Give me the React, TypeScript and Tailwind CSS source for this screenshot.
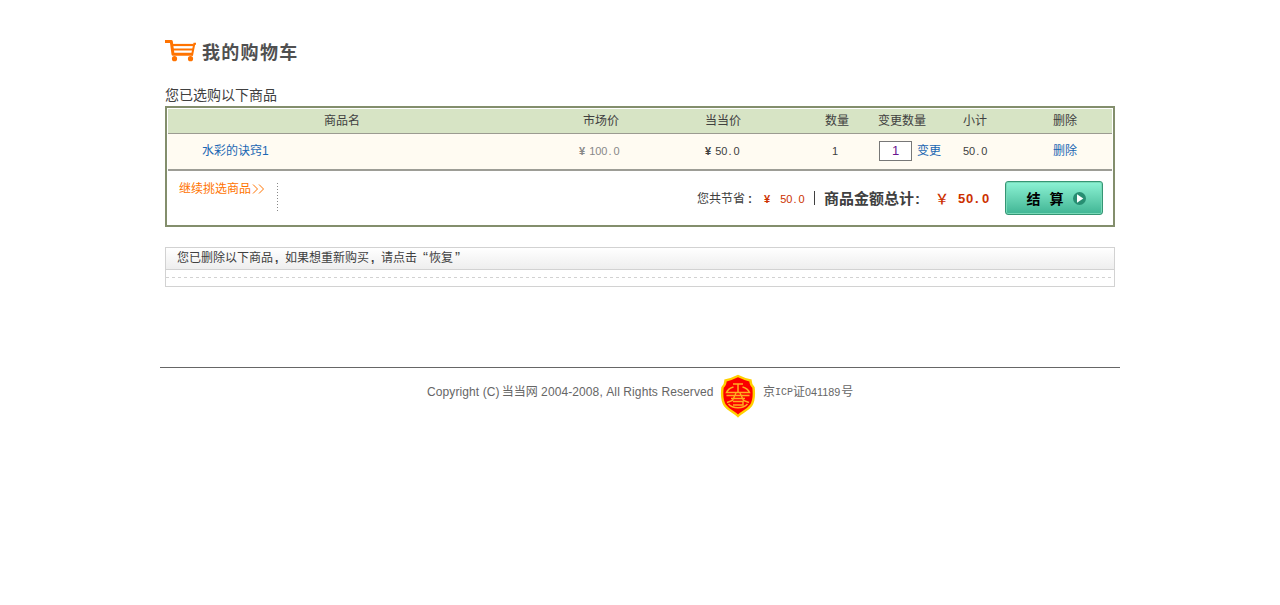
import type { ReactNode } from 'react';

const COLS = 'grid grid-cols-[411px_126px_120px_53px_85px_90px_59px] items-center';

function Amount({ value, dot = 'w-1.5' }: { value: string; dot?: string }) {
  const [whole, cents] = value.split('.');
  return (
    <span>
      {whole}
      <span className={'inline-block pl-px ' + dot}>.</span>
      {cents}
    </span>
  );
}

function Link({ children }: { children: ReactNode }) {
  return (
    <a href="#" className="text-[#1a66b3]">
      {children}
    </a>
  );
}

function CartIcon() {
  return (
    <svg width="32" height="22" viewBox="0 0 32 22" fill="none" stroke="#ff7300">
      <path d="M0 1.5H6.3L8 14.3H27.8" strokeWidth="3" strokeLinejoin="round" />
      <path d="M7 5H28.5" strokeWidth="2.2" />
      <path d="M8 9.5H28" strokeWidth="2" />
      <path d="M31 3.7H29.3L27 15.5" strokeWidth="2" />
      <circle cx="9.5" cy="18.7" r="2.6" fill="#ff7300" stroke="none" />
      <circle cx="25.5" cy="18.7" r="2.6" fill="#ff7300" stroke="none" />
    </svg>
  );
}

function Shield() {
  return (
    <svg width="36" height="44" viewBox="0 0 36 44" fill="none" stroke="#ffae20">
      <path
        d="M18 2C22 4 26 5.5 30.5 6.5C30.5 9 31.5 11.5 33.5 13.5C34.5 22 34 27 31 31.5C27.5 36.5 22 38 18 42C14 38 8.5 36.5 5 31.5C2 27 1.5 22 2.5 13.5C4.5 11.5 5.5 9 5.5 6.5C10 5.5 14 4 18 2Z"
        fill="#fb0000"
        stroke="#ffd000"
        strokeWidth="2.4"
      />
      <path d="M13 10H23M18 10V18.5M13.5 13C10 14 7.5 16 6.5 18.5H29.5C28.5 16 26 14 22.5 13" strokeWidth="1.5" />
      <path d="M6.5 21.5H29.5M11 24.5H25M16 19L12.5 26.5L7 28.5M20 19L23.5 26.5L29 28.5M13 27.5H23V31H13M8.5 30C12.5 35 23.5 35 27.5 30" strokeWidth="1.4" />
    </svg>
  );
}

export default function App() {
  return (
    <div className="min-h-[605px] bg-white font-['Liberation_Sans','Noto_Sans_CJK_SC',sans-serif] text-xs leading-4 text-[#404040]">
      <main className="mx-auto w-[950px] pt-10">
        <h1 className="flex h-6 items-start gap-[5px]">
          <CartIcon />
          <span className="pt-px text-[18px] leading-6 font-bold tracking-[1.3px] whitespace-nowrap text-[#505050]">我的购物车</span>
        </h1>
        <p className="mt-[21px] mb-px h-5 text-sm leading-5">您已选购以下商品</p>

        <section className="h-[121px] border-2 border-[#838e6c] p-px">
          <div className={COLS + ' h-[25px] border-b border-[#9b9b91] bg-[#d7e4c5]'}>
            <span className="pl-[156px]">商品名</span>
            <span className="pl-1">市场价</span>
            <span>当当价</span>
            <span>数量</span>
            <span>变更数量</span>
            <span>小计</span>
            <span>删除</span>
          </div>
          <div className={COLS + ' h-[37px] border-b-2 border-[#9d9d96] bg-[#fffbf2] pb-0.5'}>
            <span className="pl-[34px]">
              <Link>水彩的诀窍1</Link>
            </span>
            <span className="flex gap-1 text-[11px] text-[#888]">
              <b>¥</b>
              <Amount value="100.0" />
            </span>
            <span className="flex gap-1 text-[11px]">
              <b>¥</b>
              <Amount value="50.0" />
            </span>
            <span className="pl-[7px] text-[11px]">1</span>
            <span className="flex items-center gap-[5px] pl-px">
              <input
                defaultValue="1"
                aria-label="数量"
                className="h-5 w-[33px] border border-[#777] bg-white text-center text-[13px] leading-4 text-[#6a1590] outline-none"
              />
              <Link>变更</Link>
            </span>
            <span className="text-[11px]">
              <Amount value="50.0" />
            </span>
            <Link>删除</Link>
          </div>
          <div className="flex h-[53px] justify-between pr-[9px] pl-[11px]">
            <a href="#" className="mt-2.5 flex h-[31px] w-[99px] text-[#ff7300]">
              <span>继续挑选商品</span>
              <svg width="14" height="10" viewBox="0 0 14 10" className="mt-[3px] ml-px" fill="none" stroke="#ff7300">
                <path d="M1 .5L5.5 5L1 9.5M7 .5L11.5 5L7 9.5" />
              </svg>
              <span className="mt-0.5 ml-auto h-[29px] w-px bg-[repeating-linear-gradient(180deg,#888_0px,#888_1px,transparent_1px,transparent_3px)]" />
            </a>
            <div className="mt-2.5 flex h-[34px] items-center">
              <span className="flex w-[67px] items-center pt-0.5 whitespace-nowrap">
                <span className="w-12">您共节省</span>
                <b className="pl-[3px]">:</b>
              </span>
              <span className="flex w-[50px] gap-2.5 pt-0.5 text-[11px] text-[#cc3100]">
                <b>¥</b>
                <Amount value="50.0" />
              </span>
              <span className="mr-[9px] h-3.5 w-px bg-[#404040]" />
              <b className="w-[111px] pt-px text-[15px] whitespace-nowrap">
                商品金额总计<span className="pl-px">:</span>
              </b>
              <span className="w-[23px] pt-px text-sm font-medium text-[#cc3100]">￥</span>
              <b className="w-[47px] pt-px text-[13px] tracking-[.8px] text-[#cc3100]">
                <Amount value="50.0" dot="w-2" />
              </b>
              <button className="flex h-[34px] w-[98px] items-center justify-center gap-2 rounded-[3px] border border-[#359574] bg-gradient-to-b from-[#8cf3d5] to-[#3fb594] pt-px pl-1 text-sm font-bold text-black shadow-[inset_0_0_0_1px_#78d9b8]">
                <span className="flex gap-[9px]">
                  <span>结</span>
                  <span>算</span>
                </span>
                <svg width="13" height="13" viewBox="0 0 13 13" className="ml-px">
                  <circle cx="6.5" cy="6.5" r="6.5" fill="#278e72" />
                  <path d="M4 2.3L10.3 6.5L4 10.7Z" fill="#fff" />
                </svg>
              </button>
            </div>
          </div>
        </section>

        <section className="mt-5 h-10 border border-[#d2d2d2]">
          <div className="h-[22px] border-b border-[#d2d2d2] bg-gradient-to-b from-white to-[#eee] pl-[11px] leading-5">
            <span>您已删除以下商品</span>
            <span className="inline-block w-3 pl-0.5 font-bold">,</span>
            <span>如果想重新购买</span>
            <span className="inline-block w-3 pl-0.5 font-bold">,</span>
            <span>请点击</span>
            <span className="inline-block w-3 pr-px text-right text-[15px] leading-4">“</span>
            <span>恢复</span>
            <span className="inline-block pl-0.5 text-[15px] leading-4">”</span>
          </div>
          <div className="h-2 bg-[repeating-linear-gradient(90deg,#d2d2d2_0px,#d2d2d2_3px,transparent_3px,transparent_6px)] bg-[length:100%_1px] bg-bottom bg-no-repeat" />
        </section>
      </main>

      <footer className="mx-auto mt-20 flex w-[960px] border-t border-[#666] pt-1.5 pl-[267px] whitespace-nowrap text-[#666]">
        <span className="mt-2.5 w-[293px] tracking-[.1px]">
          Copyright (C)<span className="pl-0.5 tracking-normal">当当网</span> 2004-2008, All Rights Reserved
        </span>
        <Shield />
        <span className="mt-2.5 ml-[7px] flex">
          <span>京</span>
          <span className="w-[18px] font-['Liberation_Mono',monospace] text-[10px] leading-[17px]">ICP</span>
          <span>证</span>
          <span className="text-[10.8px]">041189</span>
          <span className="pl-px">号</span>
        </span>
      </footer>
    </div>
  );
}
